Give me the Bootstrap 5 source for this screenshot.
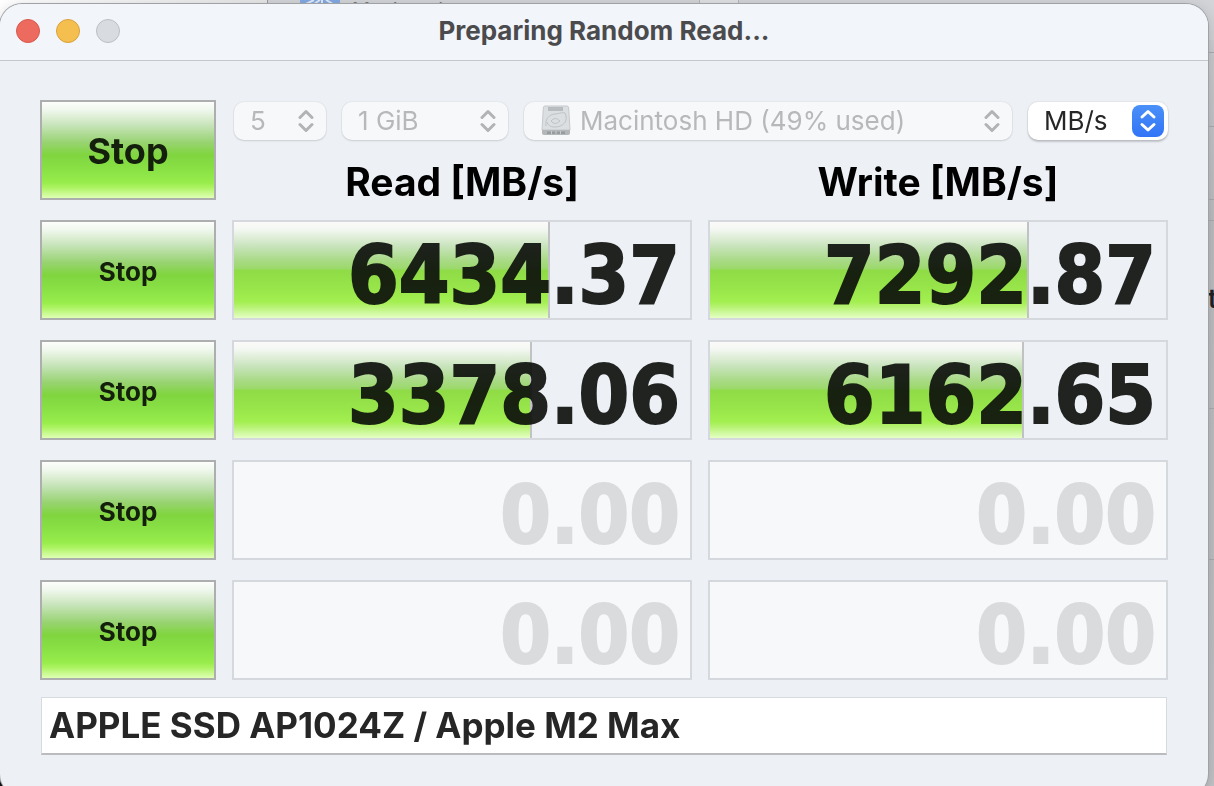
<!DOCTYPE html>
<html lang="en">
<head>
<meta charset="utf-8">
<meta name="viewport" content="width=device-width, initial-scale=1">
<title>Preparing Random Read...</title>
<link href="https://cdn.jsdelivr.net/npm/bootstrap@5.3.0/dist/css/bootstrap.min.css" rel="stylesheet">
<style>
  body { font-family: Inter, "Liberation Sans", sans-serif; background: #c5c6c9; }
  /* windows lying behind the benchmark */
  .backdrop-desk { background: linear-gradient(#dcdde0, #c9cacd 60px, #bdbec1 220px, #bfc0c3 560px, #c3c4c7); }
  .back-top { height: 40px; }
  .back-left { width: 267px; background: linear-gradient(90deg, #fff, #e6e6e6); }
  .back-bar { padding-left: 32px; border-left: 1px solid #999; font-size: 20px; line-height: 20px; color: #77787c; background: #d3d4d7; }
  .back-icon { width: 40px; height: 20px; background: #83a9e3; }
  .back-name { margin-left: 12px; width: 347px; }
  .back-tab { width: 40px; border-left: 1px solid #b5b6b9; border-right: 1px solid #b5b6b9; background: #dfe0e3; }
  .back-side { width: 6px; padding-top: 12px; }
  .back-side > div { border-top: 1px solid #abacaf; color: #222; font-size: 26px; line-height: 32px; font-weight: 600; }
  .back-dark { width: 24px; height: 24px; background: #111; }
  .bench { margin: 4px 6px 0 0; min-height: calc(100vh + 6px); border-radius: 22px; background: #edf0f5; box-shadow: 0 0 0 1px #a0a1a5, 0 4px 16px rgba(0,0,0,.2); }
  .bench-title { height: 57px; padding-bottom: 2px; background: #f2f5fa; border-bottom: 1px solid #c6c7cc; color: #4b4b4d; font-size: 26px; line-height: 32px; font-weight: 700; }
  .dot { width: 24px; height: 24px; border-radius: 50%; border: 1px solid #d9584c; background: #ec6a5e; }
  .dot-min { background: #f5bf4f; border-color: #d9a23c; }
  .dot-off { background: #d8dbe0; border-color: #bcbfc4; }
  .bench-body { padding: 39px 40px 32px; }
  .bench-grid { display: grid; grid-template-columns: 176px 1fr 1fr; grid-auto-rows: 100px; gap: 20px 16px; }
  .tools { grid-column: span 2; }
  .selects { padding: 2px 0 0 2px; }
  .run-btn { border: 2px solid #adaeae; border-radius: 0; padding: 2px 0 0; color: #14200b; font-size: 26px; font-weight: 700;
    background: linear-gradient(#fcfefb 0, #f1f8ee 8%, #c5e3b7 25%, #98d372 42%, #80d53f 55%, #89e145 70%, #98ed4b 84%, #acf362 89%, #e0ffb4 100%); }
  .run-btn:hover { color: #14200b; }
  .run-all { font-size: 36px; }
  .pick { height: 38px; padding: 0 16px; border: 0; border-radius: 10px; appearance: none; background: #fff; color: #262628; font-size: 26px; line-height: 36px; box-shadow: 0 0 1px 1px rgba(0,0,0,.05), 0 2px 2px rgba(0,0,0,.18); }
  .pick:disabled { background: #f7f8fa; color: #b7b8ba; opacity: 1; box-shadow: 0 0 1px 1px rgba(0,0,0,.03), 0 1px 2px rgba(0,0,0,.12); }
  .pick-disk { padding-left: 56px; }
  .w-count { width: 92px; } .w-size { width: 166px; } .w-unit { width: 140px; }
  .arrows { right: 12px; top: 7px; color: #b2b3b5; pointer-events: none; }
  .unit-arrows { right: 4px; top: 3px; }
  .disk-art { left: 17px; top: 3px; pointer-events: none; }
  .col-title { font-size: 39px; line-height: 48px; font-weight: 700; color: #000; margin-top: 18px; }
  .score { border: 2px solid #d5d8dc; padding: 10px 10px 0 0; font-family: "DejaVu Sans Condensed", "DejaVu Sans", sans-serif; font-weight: 700; font-size: 81px; line-height: 86px; }
  .score-bar { inset: 0 auto 0 0; border-right: 2px solid #c0c2c4;
    background: linear-gradient(#fbfbfa 0, #f3f7f1 8%, #c9e4bd 25%, #a9da86 40%, #9bd96a 49%, #8edb46 50%, #98e64a 70%, #a3ef50 83%, #b8f377 89%, #e5ffc5 100%); }
  .score-num { color: #0b0d0a; opacity: .9; -webkit-text-stroke: 2px currentColor; }
  .score-idle { background: #f7f8fa; }
  .score-idle .score-num { color: #d6d8da; }
  .note-row { padding: 17px 1px 0; }
  .note { height: 58px; padding: 0 7px 2px; border: 1px solid #d7dbe0; border-bottom: 2px solid #b9bbbf; border-radius: 0; color: #262626; font-size: 35px; font-weight: 700; line-height: 44px; }
</style>
</head>
<body class="overflow-hidden">
<svg class="d-none" aria-hidden="true">
  <symbol id="chev" viewBox="0 0 16 24"><path d="M2 8.500 8 2.500 14 8.500M2 15.500 8 21.500 14 15.500" fill="none" stroke="currentColor" stroke-width="3" stroke-linecap="round" stroke-linejoin="round"/></symbol>
</svg>
<div class="backdrop-desk position-fixed top-0 start-0 w-100 h-100 d-flex flex-column" aria-hidden="true">
  <div class="back-top d-flex overflow-hidden">
    <div class="back-left flex-shrink-0"></div>
    <div class="back-bar d-flex flex-grow-1">
      <svg class="back-icon" viewBox="0 0 40 20"><path d="M6 4 14 0M14 4 20 0M22 0 22 4M26 0 33 4" stroke="#dfe9f8" stroke-width="2" fill="none"/></svg>
      <div class="back-name">Macintosh</div><div class="back-tab"></div>
    </div>
  </div>
  <div class="back-side ms-auto overflow-hidden">
    <div style="height:74px"></div><div style="height:73px"></div><div style="height:21px"></div>
    <div class="d-flex align-items-center" style="height:188px"><span class="pb-4 mb-2">t</span></div>
    <div style="height:151px"></div><div></div>
  </div>
  <div class="back-dark mt-auto"></div>
</div>
<main class="bench position-relative overflow-hidden">
  <header class="bench-title position-relative d-flex align-items-center justify-content-center">
    <div class="position-absolute start-0 d-flex gap-3 ps-3"><span class="dot"></span><span class="dot dot-min"></span><span class="dot dot-off"></span></div>
    <span>Preparing Random Read...</span>
  </header>
  <div class="bench-body">
    <div class="bench-grid">
      <button type="button" class="btn run-btn run-all">Stop</button>
      <div class="tools">
        <div class="selects d-flex gap-3">
          <div class="position-relative w-count"><select class="pick w-100" aria-label="Test count" disabled><option>5</option></select><svg class="arrows position-absolute" width="16" height="24"><use href="#chev"/></svg></div>
          <div class="position-relative w-size"><select class="pick w-100" aria-label="Test size" disabled><option>1 GiB</option></select><svg class="arrows position-absolute" width="16" height="24"><use href="#chev"/></svg></div>
          <div class="position-relative flex-grow-1"><select class="pick pick-disk w-100" aria-label="Disk" disabled><option>Macintosh HD (49% used)</option></select>
            <svg class="disk-art position-absolute" width="30" height="32" viewBox="0 0 30 32">
              <path d="M4 1H26Q27.500 1 27.700 3L29 25H1L2.300 3Q2.500 1 4 1Z" fill="#dcdfe1" stroke="#c6c9cb" stroke-width="1"/>
              <path d="M1 25H29V28Q29 30 27 30H3Q1 30 1 28Z" fill="#b4b7b9"/>
              <path d="M6 26.500H24V29H6Z" fill="#989b9d"/><path d="M10.500 26V29M15 26V29M19.500 26V29" stroke="#c9cccd"/>
              <path d="M7 2H22V6H7Z" fill="#b9bcbf"/>
              <path d="M5 21C4 14 8 9.500 14 9C20 8.500 20 7 24 8M24 8C28 16 22 22 14 22C9 22 7 20 6 17M10 16Q14 11 19 16Q14 21 10 16" fill="none" stroke="#bfc3c6" stroke-width="1"/>
            </svg>
            <svg class="arrows position-absolute" width="16" height="24"><use href="#chev"/></svg></div>
          <div class="position-relative w-unit"><select class="pick w-100" aria-label="Unit"><option>MB/s</option></select>
            <svg class="unit-arrows position-absolute pe-none" width="32" height="32" viewBox="0 0 32 32"><defs><linearGradient id="blue" x2="0" y2="1"><stop stop-color="#4a90f8"/><stop offset="1" stop-color="#3274f6"/></linearGradient></defs><rect width="32" height="32" rx="8" fill="url(#blue)"/><path d="M10 12 16 6.500 22 12M10 19.500 16 25 22 19.500" fill="none" stroke="#fff" stroke-width="3" stroke-linecap="round" stroke-linejoin="round"/></svg></div>
        </div>
        <div class="d-flex gap-3 text-center">
          <h2 class="col-title flex-fill w-50 mb-0">Read [MB/s]</h2>
          <h2 class="col-title flex-fill w-50 mb-0">Write [MB/s]</h2>
        </div>
      </div>

      <button type="button" class="btn run-btn">Stop</button>
      <div class="score position-relative d-flex align-items-center justify-content-end"><div class="score-bar position-absolute" style="width:69.3%"></div><span class="score-num position-relative">6434.37</span></div>
      <div class="score position-relative d-flex align-items-center justify-content-end"><div class="score-bar position-absolute" style="width:70%"></div><span class="score-num position-relative">7292.87</span></div>

      <button type="button" class="btn run-btn">Stop</button>
      <div class="score position-relative d-flex align-items-center justify-content-end"><div class="score-bar position-absolute" style="width:65.3%"></div><span class="score-num position-relative">3378.06</span></div>
      <div class="score position-relative d-flex align-items-center justify-content-end"><div class="score-bar position-absolute" style="width:68.9%"></div><span class="score-num position-relative">6162.65</span></div>

      <button type="button" class="btn run-btn">Stop</button>
      <div class="score score-idle d-flex align-items-center justify-content-end"><span class="score-num">0.00</span></div>
      <div class="score score-idle d-flex align-items-center justify-content-end"><span class="score-num">0.00</span></div>

      <button type="button" class="btn run-btn">Stop</button>
      <div class="score score-idle d-flex align-items-center justify-content-end"><span class="score-num">0.00</span></div>
      <div class="score score-idle d-flex align-items-center justify-content-end"><span class="score-num">0.00</span></div>
    </div>
    <div class="note-row">
      <input type="text" class="form-control note" aria-label="Device note" value="APPLE SSD AP1024Z / Apple M2 Max">
    </div>
  </div>
</main>
<script src="https://cdn.jsdelivr.net/npm/bootstrap@5.3.0/dist/js/bootstrap.bundle.min.js"></script>
</body>
</html>
